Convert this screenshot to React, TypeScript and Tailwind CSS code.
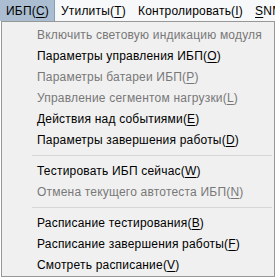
import React from 'react';

type Item = { label: string; key: string; disabled?: boolean } | { sep: true };

const ITEMS: Item[] = [
  { label: 'Включить световую индикацию модуля', key: '', disabled: true },
  { label: 'Параметры управления ИБП', key: 'O' },
  { label: 'Параметры батареи ИБП', key: 'P', disabled: true },
  { label: 'Управление сегментом нагрузки', key: 'L', disabled: true },
  { label: 'Действия над событиями', key: 'E' },
  { label: 'Параметры завершения работы', key: 'D' },
  { sep: true },
  { label: 'Тестировать ИБП сейчас', key: 'W' },
  { label: 'Отмена текущего автотеста ИБП', key: 'N', disabled: true },
  { sep: true },
  { label: 'Расписание тестирования', key: 'B' },
  { label: 'Расписание завершения работы', key: 'F' },
  { label: 'Смотреть расписание', key: 'V' },
];

function Mnemonic({ label, k }: { label: string; k: string }) {
  if (!k) return <>{label}</>;
  return (
    <>
      {label}(<span className="underline underline-offset-2">{k}</span>)
    </>
  );
}

export default function App() {
  return (
    <div className="w-[275px] h-[278px] bg-white overflow-hidden text-[12px] text-black tracking-[0.2px]" style={{ fontFamily: '"Liberation Sans", Arial, sans-serif' }}>
      {/* Menu bar */}
      <div className="flex h-[21px] items-center bg-[#f7f8f9] whitespace-nowrap overflow-hidden">
        <div className="h-full flex items-center pl-[6px] pr-[5px] bg-[#aabdd1] border-r border-[#8a9db2]">
          ИБП(<span className="underline underline-offset-2">C</span>)
        </div>
        <div className="pl-[6px] pr-[12px]">
          Утилиты(<span className="underline underline-offset-2">T</span>)
        </div>
        <div className="pr-[12px]">
          Контролировать(<span className="underline underline-offset-2">I</span>)
        </div>
        <div>
          <span className="underline underline-offset-2">S</span>NMP
        </div>
      </div>

      {/* Dropdown */}
      <div className="ml-[1px] w-[274px] border border-[#979797] bg-[#f0f0f0] pt-[2px] pb-[1px]">
        {ITEMS.map((it, i) =>
          'sep' in it ? (
            <div key={i} className="h-[10px] flex items-center pl-[30px] pr-[2px]">
              <div className="h-px w-full bg-[#d7d7d7]" />
            </div>
          ) : (
            <div
              key={i}
              className={`h-[21px] flex items-center pl-[35px] whitespace-nowrap ${it.disabled ? 'text-[#787878]' : 'text-black'}`}
            >
              <Mnemonic label={it.label} k={it.key} />
            </div>
          )
        )}
      </div>
    </div>
  );
}
